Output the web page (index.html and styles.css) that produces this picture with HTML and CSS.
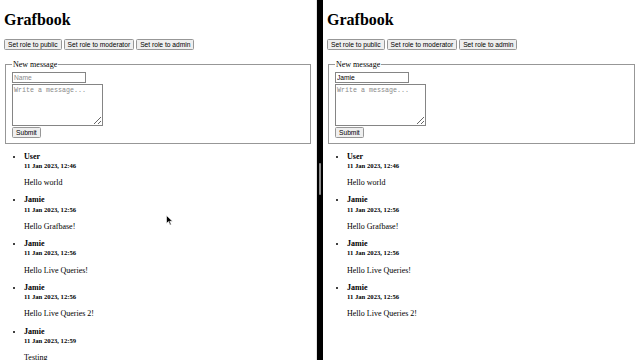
FILE: index.html
```html
<!DOCTYPE html>
<html lang="en">
<head>
    <meta charset="UTF-8">
    <meta name="viewport" content="width=device-width, initial-scale=1.0">
    <title>Grafbook</title>
    <link rel="stylesheet" href="styles.css">
</head>
<body>
    <div class="pane pane-left">
        <h1>Grafbook</h1>
        <div class="roles">
            <button type="button">Set role to public</button>
            <button type="button">Set role to moderator</button>
            <button type="button">Set role to admin</button>
        </div>
        <form class="message-form">
            <fieldset>
                <legend>New message</legend>
                <input type="text" name="name" placeholder="Name">
                <textarea name="body" placeholder="Write a message..."></textarea>
                <button type="submit">Submit</button>
            </fieldset>
        </form>
        <ul class="messages">
            <li><strong>User</strong><br><small><strong>11 Jan 2023, 12:46</strong></small><p>Hello world</p></li>
            <li><strong>Jamie</strong><br><small><strong>11 Jan 2023, 12:56</strong></small><p>Hello Grafbase!</p></li>
            <li><strong>Jamie</strong><br><small><strong>11 Jan 2023, 12:56</strong></small><p>Hello Live Queries!</p></li>
            <li><strong>Jamie</strong><br><small><strong>11 Jan 2023, 12:56</strong></small><p>Hello Live Queries 2!</p></li>
            <li><strong>Jamie</strong><br><small><strong>11 Jan 2023, 12:59</strong></small><p>Testing</p></li>
        </ul>
        <svg class="cursor" width="14" height="22" viewBox="0 0 14 22">
            <path d="M1 1 L1 17 L5 13 L8 20 L10.5 19 L7.5 12.5 L13 12.5 Z" fill="#000" stroke="#fff" stroke-width="1.2"/>
        </svg>
    </div>

    <div class="divider">
        <div class="thumb"></div>
    </div>

    <div class="pane pane-right">
        <h1>Grafbook</h1>
        <div class="roles">
            <button type="button">Set role to public</button>
            <button type="button">Set role to moderator</button>
            <button type="button">Set role to admin</button>
        </div>
        <form class="message-form">
            <fieldset>
                <legend>New message</legend>
                <input type="text" name="name" placeholder="Name" value="Jamie">
                <textarea name="body" placeholder="Write a message..."></textarea>
                <button type="submit">Submit</button>
            </fieldset>
        </form>
        <ul class="messages">
            <li><strong>User</strong><br><small><strong>11 Jan 2023, 12:46</strong></small><p>Hello world</p></li>
            <li><strong>Jamie</strong><br><small><strong>11 Jan 2023, 12:56</strong></small><p>Hello Grafbase!</p></li>
            <li><strong>Jamie</strong><br><small><strong>11 Jan 2023, 12:56</strong></small><p>Hello Live Queries!</p></li>
            <li><strong>Jamie</strong><br><small><strong>11 Jan 2023, 12:56</strong></small><p>Hello Live Queries 2!</p></li>
        </ul>
    </div>
</body>
</html>
```

FILE: styles.css
```css
html, body {
    margin: 0;
    padding: 0;
    height: 100%;
    overflow: hidden;
}

body {
    display: flex;
    background-color: #fff;
    font-family: "Liberation Serif", "Times New Roman", serif;
    color: #000;
}

/* each pane is a full-size page shown at half scale */
.pane {
    position: relative;
    flex: none;
    width: 634px;
    height: 720px;
    padding: 0 8px;
    box-sizing: border-box;
    overflow: hidden;
    zoom: 0.5;
    font-size: 16px;
}

.pane-left {
    border-right: 2px solid #e4e4e4;
}

.divider {
    position: relative;
    flex: none;
    width: 6px;
    background-color: #000;
}

.thumb {
    position: absolute;
    left: 2px;
    top: 163px;
    width: 2px;
    height: 32px;
    border-radius: 1px;
    background-color: #8c8c8c;
}

h1 {
    font-size: 32px;
    margin: 21.44px 0;
}

.roles {
    margin-bottom: 20px;
}

button,
input[type="text"] {
    font-family: "Liberation Sans", Arial, sans-serif;
    font-size: 13.33px;
    color: #000;
}

button {
    padding: 2px 6px;
    border: 2px solid #979797;
    border-radius: 3px;
    background-color: #efefef;
    line-height: normal;
}

fieldset {
    margin: 0 2px;
    padding: 5.6px 12px 10px;
    border: 2px solid #979797;
}

legend {
    padding: 0 2px;
}

input[type="text"] {
    display: block;
    width: 147px;
    height: 21px;
    box-sizing: border-box;
    margin: 0 0 2px;
    padding: 1px 2px;
    border: 2px solid #858585;
}

textarea {
    display: block;
    width: 181px;
    height: 84px;
    box-sizing: border-box;
    margin: 0 0 2px;
    padding: 2px;
    border: 2px solid #858585;
    font-family: "Liberation Mono", "Courier New", monospace;
    font-size: 13.33px;
}

input::placeholder,
textarea::placeholder {
    color: #8a8a8a;
}

.messages {
    margin: 16px 0;
    padding-left: 40px;
    line-height: 18.5px;
}

.messages p {
    margin: 16px 0;
}

.cursor {
    position: absolute;
    left: 332px;
    top: 430px;
}
```
